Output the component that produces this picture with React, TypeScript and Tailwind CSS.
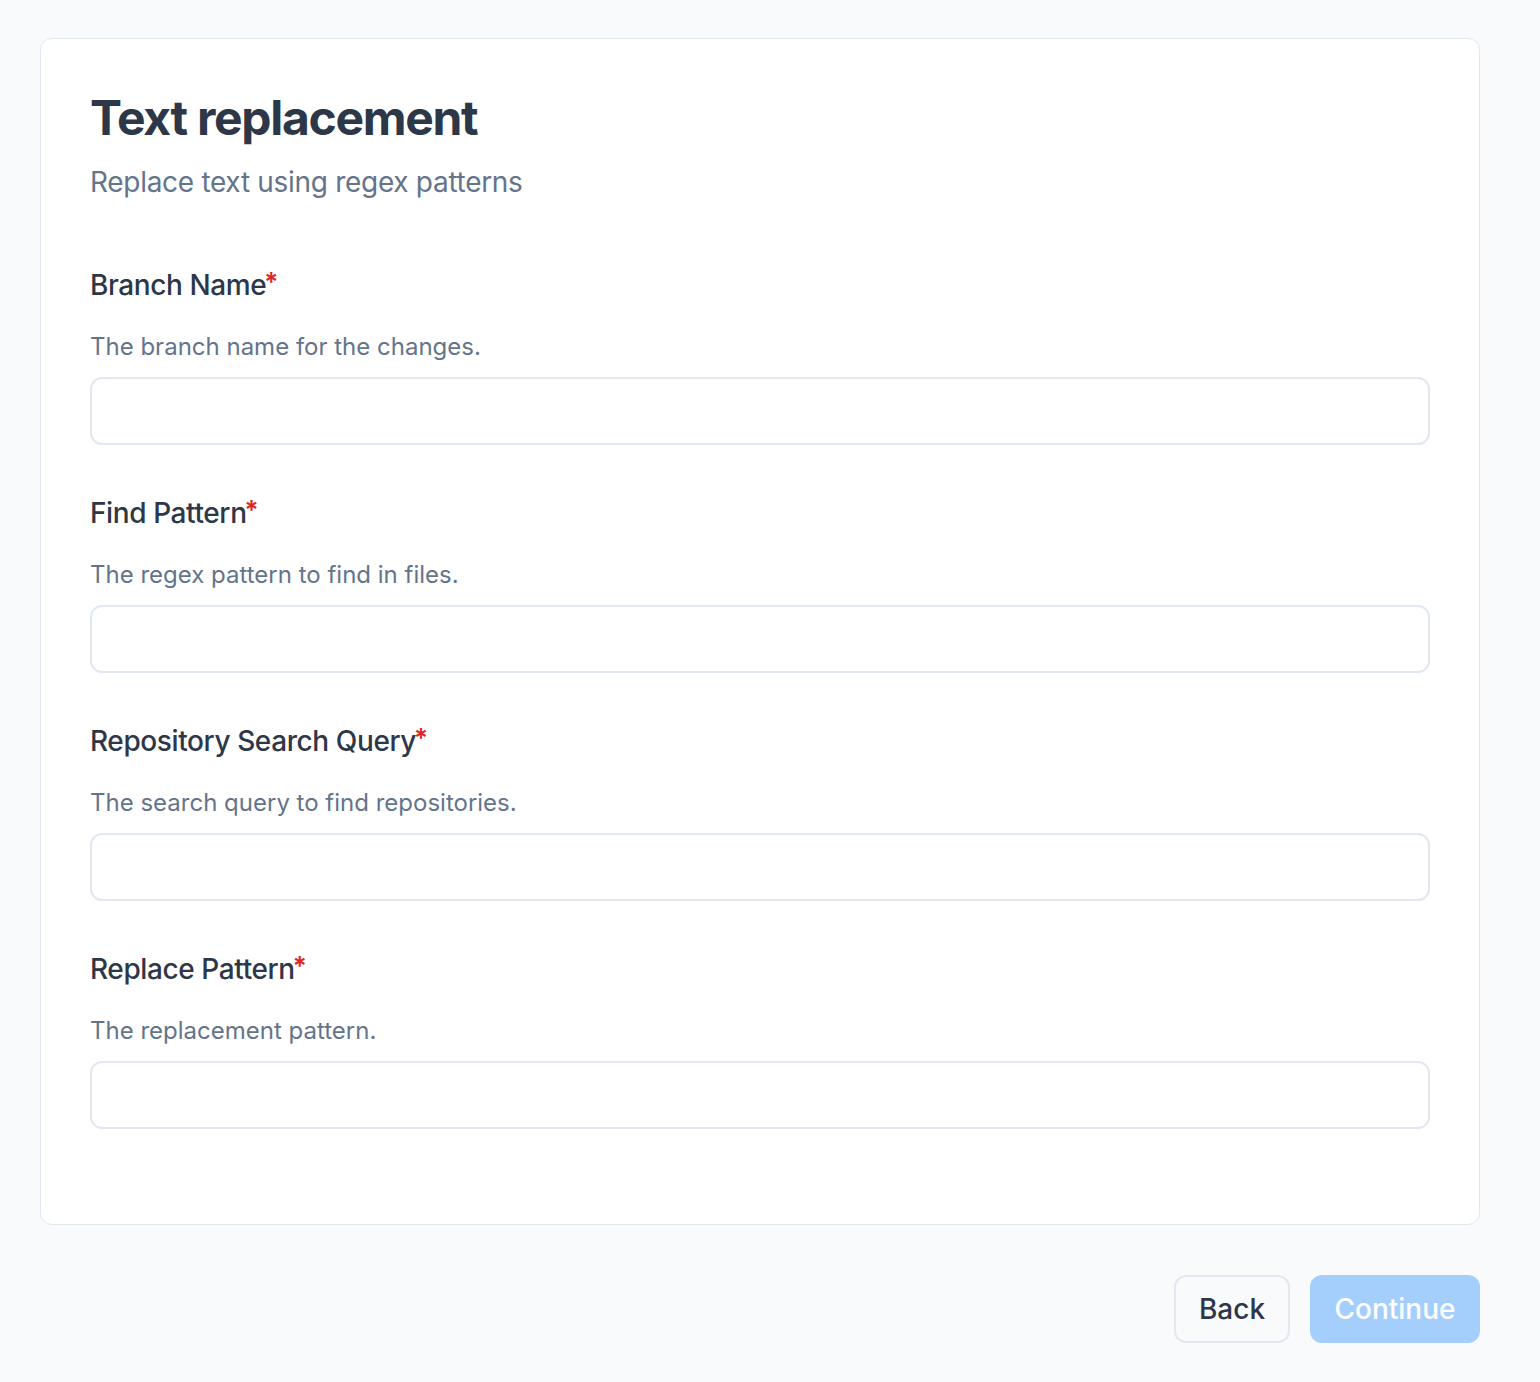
import React from 'react';

const fields = [
  { label: 'Branch Name', help: 'The branch name for the changes.' },
  { label: 'Find Pattern', help: 'The regex pattern to find in files.' },
  { label: 'Repository Search Query', help: 'The search query to find repositories.' },
  { label: 'Replace Pattern', help: 'The replacement pattern.' },
];

const Field = ({ label, help }: { label: string; help: string }) => (
  <div className="flex flex-col">
    <label className="text-[28px] leading-[40px] font-medium text-[#2d3748] tracking-[-0.4px]">
      {label}
      <span className="text-[26px] font-semibold align-top text-[#dc2626] relative top-[-3px] -ml-[2px]">*</span>
    </label>
    <p className="mt-[26px] text-[24px] leading-[32px] text-[#64748b]">{help}</p>
    <input
      type="text"
      className="mt-[14px] h-[68px] w-full rounded-[12px] border-2 border-[#e2e8f0] bg-white px-4 text-[28px] outline-none"
    />
  </div>
);

export default function App() {
  return (
    <div
      className="min-h-[1382px] bg-[#f8fafc] pt-[38px] pb-[40px] pl-[40px]"
      style={{ fontFamily: 'Inter, "Noto Sans", sans-serif' }}
    >
      <div className="w-[1440px]">
        <div className="rounded-[12px] border border-[#e2e8f0] bg-white px-[49px] pt-[50px] pb-[95px]">
          <h1 className="text-[48px] leading-[58px] font-bold text-[#2d3748] tracking-[-1.3px]">Text replacement</h1>
          <p className="mt-[15px] text-[28px] leading-[40px] text-[#64748b] tracking-[-0.3px]">
            Replace text using regex patterns
          </p>
          <div className="mt-[63px] flex flex-col gap-[48px]">
            {fields.map((f) => (
              <Field key={f.label} label={f.label} help={f.help} />
            ))}
          </div>
        </div>
        <div className="mt-[50px] flex justify-end gap-[20px]">
          <button className="h-[68px] w-[116px] rounded-[12px] border-2 border-[#e2e8f0] bg-[#f8fafc] text-[28px] font-medium text-[#2d3748]">
            Back
          </button>
          <button className="h-[68px] w-[170px] rounded-[12px] bg-[#a4cffd] text-[28px] font-medium text-white">
            Continue
          </button>
        </div>
      </div>
    </div>
  );
}
